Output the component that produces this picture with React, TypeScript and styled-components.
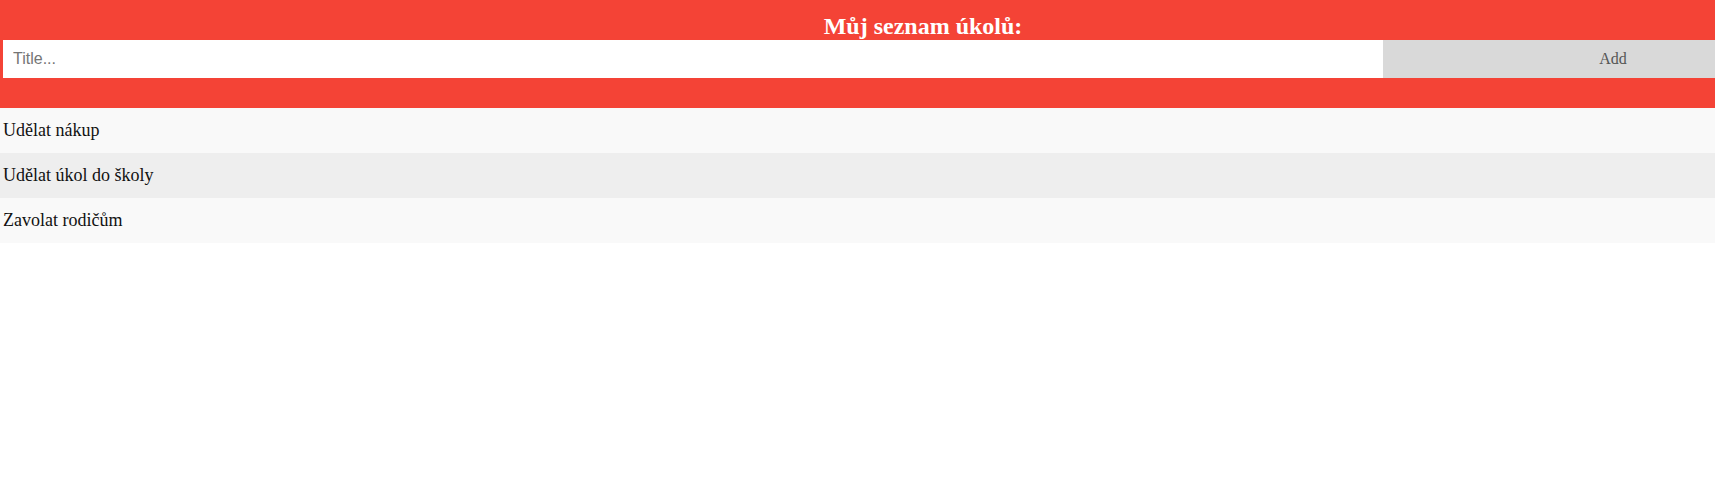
import React, { useState } from 'react';
import styled, { createGlobalStyle } from 'styled-components';

const GlobalStyle = createGlobalStyle`
  html, body {
    margin: 0;
    padding: 0;
    background: #ffffff;
    overflow-x: hidden;
  }
  * {
    box-sizing: border-box;
  }
`;

// Red header with the title and the add form
const Header = styled.div`
  background-color: #f44336;
  padding: 12px 0 30px 3px;
  overflow: hidden;
`;

const HeaderInner = styled.div`
  width: 1840px;
`;

const Title = styled.h2`
  margin: 0;
  height: 28px;
  color: #ffffff;
  text-align: center;
  font-family: 'Liberation Serif', 'Times New Roman', serif;
  font-size: 24px;
  font-weight: bold;
  line-height: 28px;
`;

const Form = styled.div`
  display: flex;
`;

const TitleInput = styled.input`
  width: 75%;
  height: 38px;
  margin: 0;
  border: none;
  border-radius: 0;
  padding: 10px;
  font-family: 'Liberation Sans', Arial, sans-serif;
  font-size: 16px;
  outline: none;

  &::placeholder {
    color: #757575;
  }
`;

const AddButton = styled.span`
  width: 25%;
  height: 38px;
  padding: 10px;
  background: #d9d9d9;
  color: #555;
  text-align: center;
  font-family: 'Liberation Serif', 'Times New Roman', serif;
  font-size: 16px;
  line-height: 18px;
  cursor: pointer;
`;

const List = styled.ul`
  margin: 0;
  padding: 0;
  list-style: none;
`;

const Item = styled.li<{ $odd: boolean }>`
  height: 45px;
  padding: 0 3px;
  display: flex;
  align-items: center;
  background: ${(p) => (p.$odd ? '#eeeeee' : '#f9f9f9')};
  color: #111;
  font-family: 'Liberation Serif', 'Times New Roman', serif;
  font-size: 18px;
`;

const App: React.FC = () => {
  const [todos, setTodos] = useState<string[]>([
    'Udělat nákup',
    'Udělat úkol do školy',
    'Zavolat rodičům',
  ]);
  const [text, setText] = useState('');

  const add = () => {
    if (!text.trim()) return;
    setTodos([...todos, text.trim()]);
    setText('');
  };

  return (
    <>
      <GlobalStyle />
      <Header>
        <HeaderInner>
          <Title>Můj seznam úkolů:</Title>
          <Form>
            <TitleInput
              type="text"
              placeholder="Title..."
              value={text}
              onChange={(e) => setText(e.target.value)}
            />
            <AddButton onClick={add}>Add</AddButton>
          </Form>
        </HeaderInner>
      </Header>
      <List>
        {todos.map((t, i) => (
          <Item key={i} $odd={i % 2 === 1}>
            {t}
          </Item>
        ))}
      </List>
    </>
  );
};

export default App;
